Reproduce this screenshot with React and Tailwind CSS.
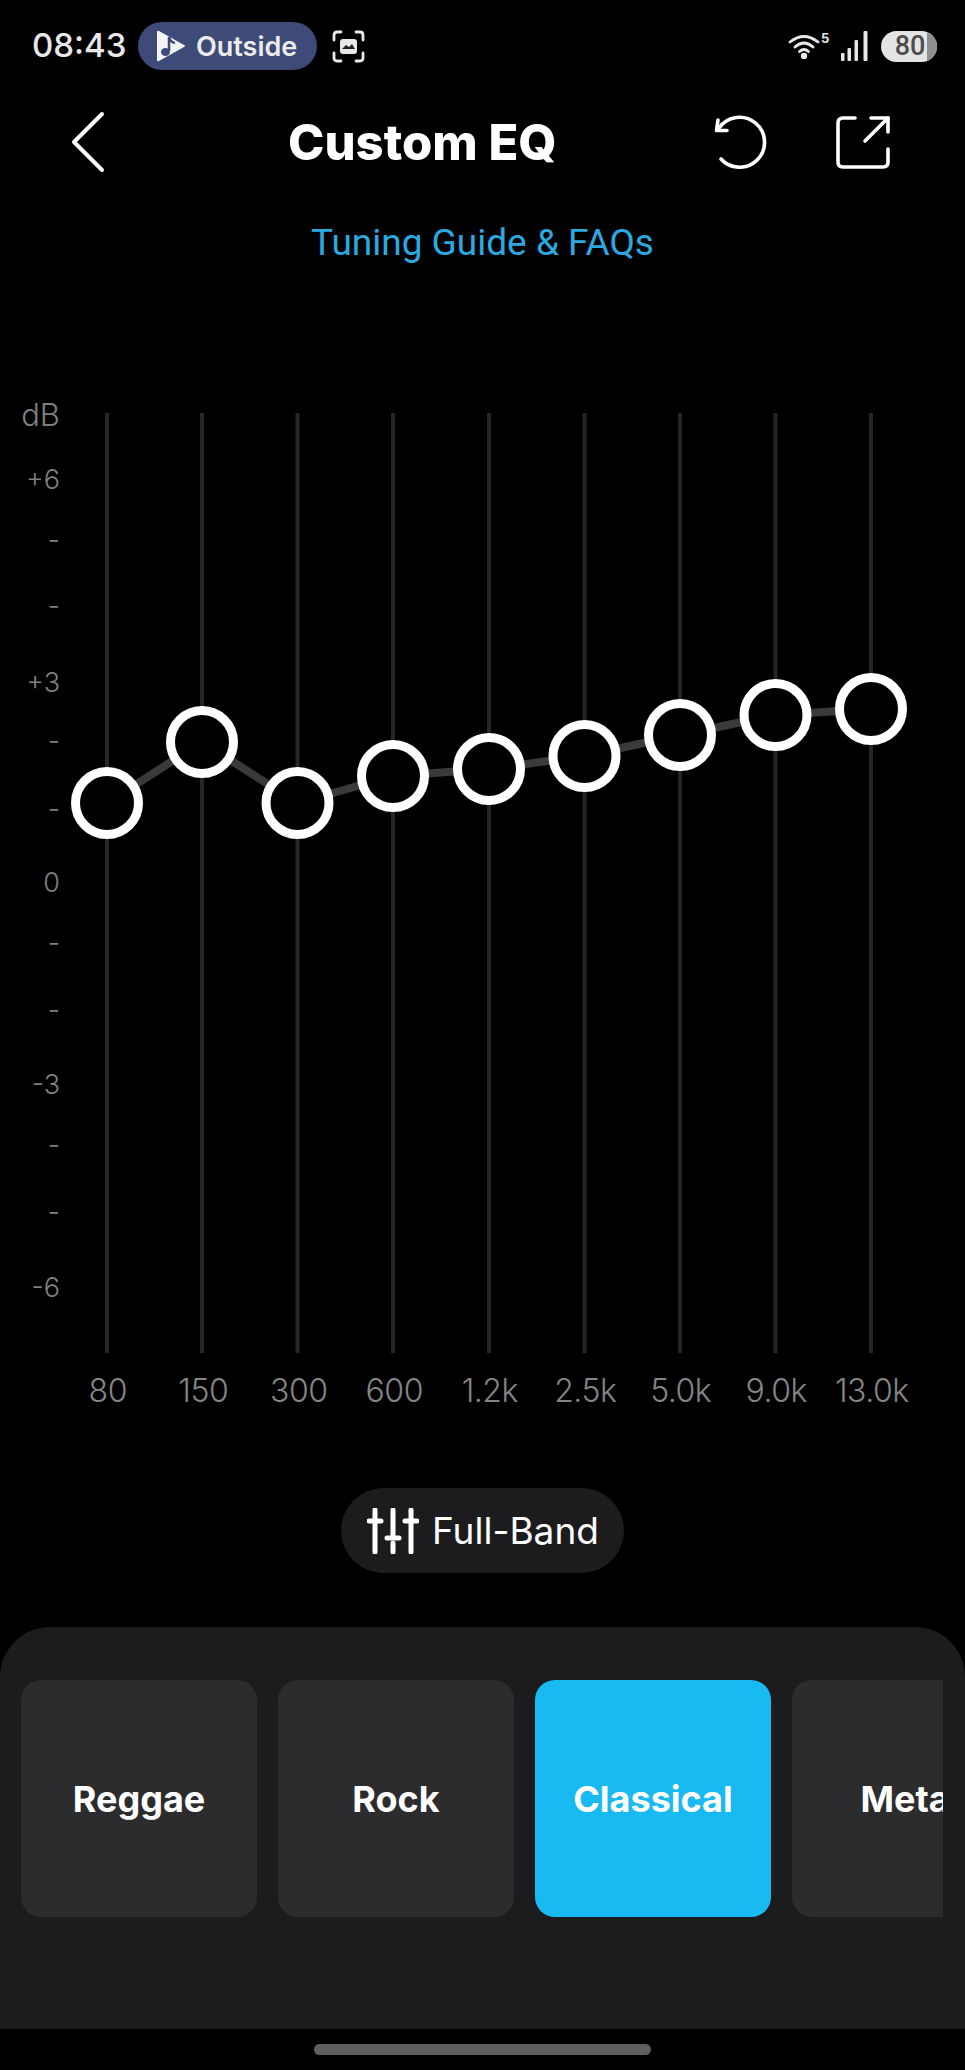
const bands = [
  { x: 107, y: 803, label: "80" },
  { x: 202, y: 742, label: "150" },
  { x: 297.5, y: 803, label: "300" },
  { x: 393, y: 776, label: "600" },
  { x: 489, y: 769, label: "1.2k" },
  { x: 584.5, y: 756, label: "2.5k" },
  { x: 680, y: 735, label: "5.0k" },
  { x: 775.5, y: 715, label: "9.0k" },
  { x: 871, y: 709, label: "13.0k" },
];

const ticks = [
  { text: "dB", cls: "text-[31px]" },
  { text: "+6", cls: "mt-[25px]" },
  { text: "-", cls: "mt-[20px]" },
  { text: "-", cls: "mt-[26px]" },
  { text: "+3", cls: "mt-[37px]" },
  { text: "-", cls: "mt-[18px]" },
  { text: "-", cls: "mt-[28px]" },
  { text: "0", cls: "mt-[34px]" },
  { text: "-", cls: "mt-[20px]" },
  { text: "-", cls: "mt-[27px]" },
  { text: "-3", cls: "mt-[35px]" },
  { text: "-", cls: "mt-[20px]" },
  { text: "-", cls: "mt-[27px]" },
  { text: "-6", cls: "mt-[36px]" },
];

const presets = [
  { name: "Reggae", active: false },
  { name: "Rock", active: false },
  { name: "Classical", active: true },
  { name: "Metal", active: false },
];

const StatusBar = () => (
  <div className="h-[92px] flex items-center pl-[32px] pr-[28px] text-[#e8e8e8] font-['Inter',sans-serif]">
    <span className="text-[33px] font-medium w-[106px]">08:43</span>
    <div className="w-[179px] h-[48px] rounded-full bg-[#3e4a78] flex items-center pl-[18px] gap-[10px]">
      <svg width="30" height="34" viewBox="0 0 30 34">
        <path d="M3 2 L28 16 Q30 17 28 18 L3 32 Q1 33 1 31 V3 Q1 1 3 2 Z" fill="#f4f4f4" />
        <path d="M13 8 V22" stroke="#3e4a78" strokeWidth="2.5" fill="none" />
        <path d="M13 8 Q14 13 19 14" stroke="#3e4a78" strokeWidth="2.5" fill="none" />
        <ellipse cx="9.5" cy="23" rx="4.5" ry="4" fill="#3e4a78" />
      </svg>
      <span className="text-[27px] font-semibold text-[#ececec] leading-none">Outside</span>
    </div>
    <svg className="ml-[15px]" width="33" height="33" viewBox="0 0 33 33" fill="none">
      <path d="M2 10 V5 Q2 2 5 2 H9 M24 2 H28 Q31 2 31 5 V10 M31 23 V28 Q31 31 28 31 H24 M9 31 H5 Q2 31 2 28 V23" stroke="#e8e8e8" strokeWidth="2.8" strokeLinecap="round" />
      <rect x="8" y="9" width="17" height="15" rx="3" fill="#e8e8e8" />
      <path d="M10 19 L14 15 L17 17 L20 14 L23 19 Z" fill="#222" />
    </svg>
    <div className="ml-auto flex items-center">
      <svg width="32" height="26" viewBox="0 0 32 26" fill="none" stroke="#e8e8e8" strokeWidth="2.8" strokeLinecap="round">
        <path d="M2 9 Q16 -2 30 9" />
        <path d="M7 14 Q16 6 25 14" />
        <path d="M11.5 18.5 Q16 14.5 20.5 18.5" />
        <circle cx="16" cy="23" r="1.8" fill="#e8e8e8" />
      </svg>
      <span className="text-[13px] leading-[14px] font-bold self-start ml-[1px] w-[20px]">5</span>
      <svg width="28" height="30" viewBox="0 0 28 30" fill="#e8e8e8">
        <rect x="0" y="22" width="3.5" height="8" rx="1" />
        <rect x="6.5" y="17" width="3.5" height="13" rx="1" />
        <rect x="13.5" y="9" width="3.5" height="21" rx="1" />
        <rect x="22.5" y="0" width="4" height="30" rx="1" />
      </svg>
      <div className="ml-[12px] w-[56px] h-[31px] rounded-full bg-[#e4e4e4] overflow-hidden flex">
        <div className="w-[46px] flex items-center justify-center pl-[12px] text-[27px] leading-none font-medium text-[#4c4c4c] font-['Roboto',sans-serif]">80</div>
        <div className="flex-1 bg-[#8e8e8e]" />
      </div>
    </div>
  </div>
);

const Header = () => (
  <div className="h-[100px] flex items-center text-white">
    <svg className="ml-[70px]" width="36" height="62" viewBox="0 0 36 62" fill="none" stroke="white" strokeWidth="4" strokeLinecap="round" strokeLinejoin="round">
      <path d="M32 3 L4 31 L32 59" />
    </svg>
    <h1 className="ml-[182px] w-[266px] text-[49px] font-extrabold font-['Inter',sans-serif] leading-none whitespace-nowrap">Custom EQ</h1>
    <svg className="ml-[159px]" width="54" height="54" viewBox="0 0 54 54" fill="none" stroke="white" strokeWidth="3.6" strokeLinecap="round" strokeLinejoin="round">
      <path d="M8 44 A25 25 0 1 0 6 13" />
      <path d="M5 5 L3.5 15.5 L14 15.5" />
    </svg>
    <svg className="ml-[69px]" width="55" height="54" viewBox="0 0 55 54" fill="none" stroke="white" strokeWidth="3.6" strokeLinecap="round" strokeLinejoin="round">
      <path d="M19 3 H7 Q2 3 2 8 V47 Q2 52 7 52 H47 Q52 52 52 47 V34" />
      <path d="M29 26 L52 3" />
      <path d="M35 3 H52 V17" />
    </svg>
  </div>
);

const Chart = () => {
  const curve = bands.map((b) => `${b.x},${b.y}`).join(" ");
  return (
    <div className="mt-[127px] flex font-['Inter',sans-serif]">
      <div className="w-[64px] pr-[4px] flex flex-col items-end text-[27px] font-light text-[#808080]">
        {ticks.map((t, i) => (
          <span key={i} className={`h-[40px] leading-[40px] ${t.cls}`}>{t.text}</span>
        ))}
      </div>
      <svg width="901" height="965" viewBox="64 395 901 965" fill="none">
        {bands.map((b) => (
          <line key={b.label} x1={b.x} y1="413" x2={b.x} y2="1353" stroke="#262626" strokeWidth="4" />
        ))}
        <polyline points={curve} stroke="#3a3a3a" strokeWidth="8" />
        {bands.map((b) => (
          <circle key={b.label} cx={b.x} cy={b.y} r="31.5" fill="#000" stroke="#fff" strokeWidth="9" />
        ))}
      </svg>
    </div>
  );
};

const App = () => (
  <div className="w-[965px] h-[2070px] bg-black flex flex-col overflow-hidden">
    <StatusBar />
    <Header />
    <div className="mt-[26px] h-[50px] flex items-center justify-center text-[37px] text-[#2aaae0] font-['Roboto',sans-serif]">
      Tuning Guide &amp; FAQs
    </div>
    <Chart />

    <div className="mt-[11px] h-[40px] pl-[60px] flex font-['Inter',sans-serif]">
      {bands.map((b) => (
        <span key={b.label} className="w-[95.5px] shrink-0 text-center text-[32px] tracking-[-0.5px] leading-[40px] font-light text-[#858585] whitespace-nowrap">{b.label}</span>
      ))}
    </div>

    <div className="mt-[77px] mx-auto w-[283px] h-[85px] rounded-full bg-[#1c1c1e] flex items-center pl-[26px] gap-[13px] text-white font-['Inter',sans-serif]">
      <svg width="52" height="46" viewBox="0 0 52 46" fill="none" stroke="white" strokeWidth="5" strokeLinecap="round">
        <path d="M8 2 V44 M26 2 V27 M26 35 V44 M44 2 V44" />
        <path d="M2 13 H14 M20 30 H32 M38 13 H50" />
      </svg>
      <span className="text-[37px] font-normal leading-none whitespace-nowrap">Full-Band</span>
    </div>

    <div className="mt-[54px] h-[402px] rounded-t-[50px] bg-[#1c1c1e] pt-[53px] pl-[21px]">
      <div className="w-[922px] flex gap-[21px] overflow-hidden">
        {presets.map((p) => (
          <div
            key={p.name}
            className={`w-[236px] h-[237px] shrink-0 rounded-[20px] flex items-center justify-center text-white text-[36px] font-bold font-['Inter',sans-serif] ${p.active ? "bg-[#19b9f1]" : "bg-[#2c2c2e]"}`}
          >
            {p.name}
          </div>
        ))}
      </div>
    </div>

    <div className="mt-[15px] mx-auto w-[337px] h-[11px] rounded-full bg-[#5f5f5f]" />
  </div>
);

export default App;
